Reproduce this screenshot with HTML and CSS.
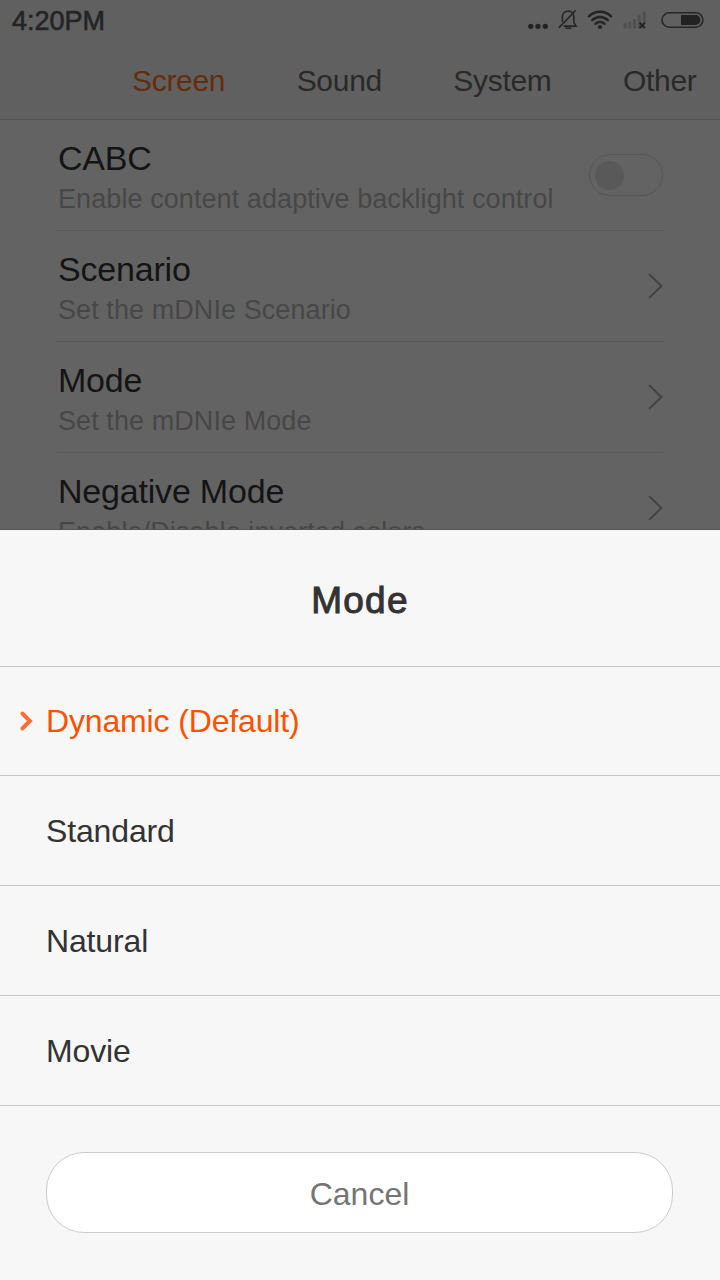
FILE: index.html
```html
<!DOCTYPE html>
<html lang="en">
<head>
<meta charset="utf-8">
<title>Mode</title>
<link rel="stylesheet" href="styles.css">
</head>
<body>
<div class="screen">
  <div class="settings">
    <header class="header">
      <div class="status">
        <span class="clock">4:20PM</span>
        <svg class="status-icons" width="188" height="42" viewBox="524 0 188 42" aria-hidden="true">
          <g class="ink-fill">
            <circle cx="530.8" cy="26.3" r="2.6"/>
            <circle cx="538" cy="26.3" r="2.6"/>
            <circle cx="545.3" cy="26.3" r="2.6"/>
          </g>
          <g class="ink-line">
            <path d="M562.4 22V16.5C562.4 13.2 565 11.1 568.1 11.1S573.8 13.2 573.8 16.5V22.2L576 26.1H563.5"/>
            <path d="M558.9 27.9L575.7 10.2"/>
            <path d="M565.3 28.2H571.3"/>
          </g>
          <g class="wifi-line">
            <path d="M588.9 16.3A15.8 15.8 0 0 1 611.1 16.3"/>
            <path d="M592.2 20.2A11 11 0 0 1 607.8 20.2"/>
            <path d="M595.4 23.8A6.5 6.5 0 0 1 604.6 23.8"/>
          </g>
          <circle class="ink-fill" cx="600" cy="27" r="2.1"/>
          <g class="signal-bars">
            <rect x="623.6" y="23" width="3" height="5.6" rx="1"/>
            <rect x="628.3" y="21.7" width="3" height="6.9" rx="1"/>
            <rect x="633" y="19" width="3" height="9.6" rx="1"/>
            <rect x="637.7" y="15" width="3" height="13.6" rx="1"/>
            <rect x="642.7" y="11.5" width="3" height="11" rx="1"/>
          </g>
          <path class="no-signal" d="M639.6 22.7L645 28.1M645 22.7L639.6 28.1"/>
          <rect class="battery" x="662" y="12.8" width="41" height="14.4" rx="7.2"/>
          <path class="ink-fill" d="M681 15H695.5A5 5 0 0 1 695.5 25H681Z"/>
        </svg>
      </div>
      <nav class="tabs">
        <span class="tab tab-active">Screen</span>
        <span class="tab">Sound</span>
        <span class="tab">System</span>
        <span class="tab">Other</span>
      </nav>
    </header>
    <main class="list">
      <div class="row">
        <div class="row-text">
          <div class="row-title">CABC</div>
          <div class="row-sub">Enable content adaptive backlight control</div>
        </div>
        <span class="toggle"><span class="knob"></span></span>
      </div>
      <div class="row">
        <div class="row-text">
          <div class="row-title">Scenario</div>
          <div class="row-sub">Set the mDNIe Scenario</div>
        </div>
        <svg class="chevron" width="15" height="26" viewBox="0 0 15 26" aria-hidden="true"><path d="M1.6 1.6L13.4 13L1.6 24.4"/></svg>
      </div>
      <div class="row">
        <div class="row-text">
          <div class="row-title">Mode</div>
          <div class="row-sub">Set the mDNIe Mode</div>
        </div>
        <svg class="chevron" width="15" height="26" viewBox="0 0 15 26" aria-hidden="true"><path d="M1.6 1.6L13.4 13L1.6 24.4"/></svg>
      </div>
      <div class="row">
        <div class="row-text">
          <div class="row-title">Negative Mode</div>
          <div class="row-sub">Enable/Disable inverted colors</div>
        </div>
        <svg class="chevron" width="15" height="26" viewBox="0 0 15 26" aria-hidden="true"><path d="M1.6 1.6L13.4 13L1.6 24.4"/></svg>
      </div>
    </main>
  </div>
  <section class="sheet">
    <h1 class="sheet-title">Mode</h1>
    <div class="option option-selected">
      <svg class="marker" width="16" height="22" viewBox="0 0 16 22" aria-hidden="true"><path d="M4.4 3.5L11.9 11L4.4 18.5"/></svg>
      <span>Dynamic (Default)</span>
    </div>
    <div class="option">Standard</div>
    <div class="option">Natural</div>
    <div class="option">Movie</div>
    <div class="actions"><button class="cancel" type="button">Cancel</button></div>
  </section>
</div>
</body>
</html>
```
FILE: styles.css
```css
* {
  box-sizing: border-box;
}

body {
  margin: 0;
}

.screen {
  display: flex;
  flex-direction: column;
  width: 720px;
  height: 1280px;
  overflow: hidden;
  font-family: "Liberation Sans", Arial, sans-serif;
}

.settings {
  flex: none;
  height: 530px;
  overflow: hidden;
  background: #636363;
  border-bottom: 1px solid #525252;
}

.header {
  height: 120px;
  background: #606060;
  border-bottom: 1px solid #505050;
}

.status {
  display: flex;
  justify-content: space-between;
  height: 42px;
  padding: 0 8px 0 12px;
}

.clock {
  font-size: 27px;
  line-height: 43px;
  color: #242424;
  -webkit-text-stroke: 0.6px #242424;
}

.ink-fill {
  fill: #222;
}

.ink-line {
  fill: none;
  stroke: #262626;
  stroke-width: 1.6;
}

.wifi-line {
  fill: none;
  stroke: #222;
  stroke-width: 2.4;
  stroke-linecap: round;
}

.signal-bars {
  fill: #505050;
}

.no-signal {
  fill: none;
  stroke: #222;
  stroke-width: 2;
}

.battery {
  fill: none;
  stroke: #262626;
  stroke-width: 1.5;
}

.tabs {
  display: flex;
  gap: 71.4px;
  padding-left: 132px;
  font-size: 30px;
  line-height: 77px;
  letter-spacing: -0.3px;
  color: #292929;
}

.tab-active {
  color: #652c0d;
}

.list {
  padding: 0 57px;
}

.row {
  display: flex;
  align-items: center;
  justify-content: space-between;
  height: 111px;
  border-bottom: 1px solid #585858;
}

.row-text {
  padding-top: 5px;
  white-space: nowrap;
}

.row-title {
  padding-left: 1px;
  font-size: 34px;
  line-height: 40px;
  letter-spacing: -0.2px;
  color: #141414;
}

.row-sub {
  margin-top: 3px;
  padding-left: 1px;
  font-size: 27px;
  line-height: 36px;
  letter-spacing: 0.08px;
  color: #474747;
}

.toggle {
  display: flex;
  align-items: center;
  width: 74px;
  height: 42px;
  padding-left: 5px;
  border: 1px solid #575757;
  border-radius: 21px;
}

.knob {
  width: 29px;
  height: 29px;
  border-radius: 50%;
  background: #595959;
}

.chevron path {
  fill: none;
  stroke: #424242;
  stroke-width: 2;
  stroke-linecap: round;
}

.sheet {
  flex: 1;
  background: #f7f7f7;
  color: #333;
}

.sheet-title {
  height: 137px;
  margin: 0;
  padding-top: 3px;
  border-bottom: 1px solid #c8c8c8;
  font-size: 37px;
  font-weight: 400;
  line-height: 136px;
  letter-spacing: 1.2px;
  text-align: center;
  -webkit-text-stroke: 1px #333;
}

.option {
  display: flex;
  align-items: center;
  height: 110px;
  padding-top: 2px;
  padding-left: 46px;
  border-bottom: 1px solid #c8c8c8;
  font-size: 32px;
  letter-spacing: -0.15px;
}

.option-selected {
  height: 109px;
  padding-top: 0;
  padding-left: 18px;
  gap: 12px;
  color: #f95200;
}

.marker path {
  fill: none;
  stroke: #ff6d38;
  stroke-width: 4;
  stroke-linecap: round;
}

.actions {
  padding: 46px 47px 47px 46px;
}

.cancel {
  display: block;
  width: 100%;
  height: 81px;
  padding: 3px 0 0;
  border: 1px solid #ccc;
  border-radius: 38px;
  background: #fff;
  font: inherit;
  font-size: 32px;
  color: #757575;
}
```
